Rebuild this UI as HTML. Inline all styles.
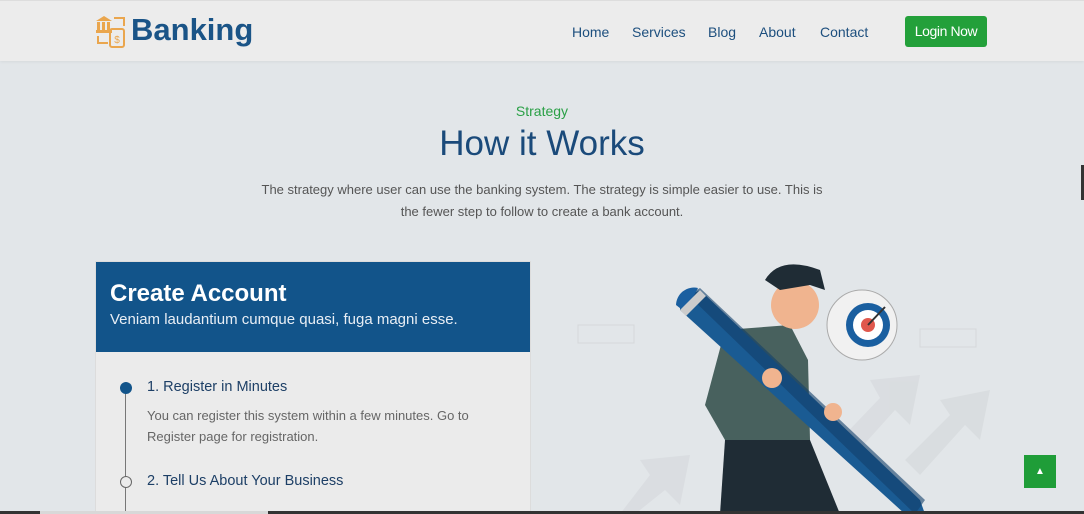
<!DOCTYPE html>
<html><head><meta charset="utf-8"><style>
*{margin:0;padding:0;box-sizing:border-box}
html,body{width:1084px;height:514px;overflow:hidden}
body{background:#e2e6e9;font-family:"Liberation Sans",sans-serif;position:relative}
.nav{position:absolute;left:0;top:0;width:1084px;height:61px;background:#ececec;border-top:1px solid #ddd;box-shadow:0 1px 3px rgba(0,0,0,.06)}
.logo{position:absolute;left:131px;top:11px;font-size:31px;color:#1a5487;font-weight:bold;letter-spacing:0px}
.links a{position:absolute;top:23px;font-size:14px;color:#1d4f7e;text-decoration:none}
.btn{position:absolute;left:905px;top:15px;width:82px;height:31px;background:#23a03a;border-radius:3px;color:#fff;font-size:14px;text-align:center;line-height:31px;letter-spacing:-0.4px}
.c{position:absolute;width:1084px;text-align:center}
.card{position:absolute;left:95px;top:261px;width:436px;height:260px;background:#ebebeb;border:1px solid #dcdcdc}
.head{height:90px;background:#12548a;padding:18px 14px;color:#fff}
</style></head><body>
<div class="nav">
<svg style="position:absolute;left:94px;top:13px" width="34" height="34" viewBox="0 0 34 34"><g fill="#eaa64e"><path d="M2 7 L10 2 L18 7 Z"/><rect x="3" y="8" width="3" height="8"/><rect x="8" y="8" width="3" height="8"/><rect x="13" y="8" width="3" height="8"/><rect x="2" y="16" width="16" height="3"/></g><g fill="none" stroke="#eaa64e" stroke-width="2"><rect x="16" y="15" width="14" height="18" rx="2"/><path d="M4 22v7h10M20 4h10v8"/></g><text x="23" y="29" font-size="10" fill="#eaa64e" text-anchor="middle" font-family="Liberation Sans">$</text></svg>
<div class="logo">Banking</div>
<div class="links"><a style="left:572px">Home</a><a style="left:632px">Services</a><a style="left:708px">Blog</a><a style="left:759px">About</a><a style="left:820px">Contact</a></div>
<div class="btn">Login Now</div>
</div>
<div class="c" style="top:103px;font-size:14px;color:#2aa046">Strategy</div>
<div class="c" style="top:124px;font-size:35px;color:#1a4a7a">How it Works</div>
<div class="c" style="top:179px;font-size:13px;color:#555;line-height:22px">The strategy where user can use the banking system. The strategy is simple easier to use. This is<br>the fewer step to follow to create a bank account.</div>
<div class="card"><div class="head"><div style="font-size:24px;font-weight:bold">Create Account</div><div style="font-size:15px;margin-top:3px;color:#e8eef5">Veniam laudantium cumque quasi, fuga magni esse.</div></div>
<div style="position:absolute;left:29px;top:126px;width:1px;height:140px;background:#777"></div>
<div style="position:absolute;left:24px;top:120px;width:12px;height:12px;border-radius:50%;background:#12548a"></div>
<div style="position:absolute;left:24px;top:214px;width:12px;height:12px;border-radius:50%;background:#ebebeb;border:1px solid #666"></div>
<div style="position:absolute;left:51px;top:117px;font-size:14.5px;color:#1d3f66">1. Register in Minutes</div>
<div style="position:absolute;left:51px;top:143px;font-size:13px;color:#666;line-height:21px">You can register this system within a few minutes. Go to<br>Register page for registration.</div>
<div style="position:absolute;left:51px;top:211px;font-size:14.5px;color:#1d3f66">2. Tell Us About Your Business</div>
</div>
<svg style="position:absolute;left:540px;top:250px" width="480" height="264" viewBox="0 0 480 264">
<g fill="#d8dbde" opacity=".8"><path d="M330 130 L380 125 L370 175 L355 160 L310 210 L295 195 L340 148Z"/><path d="M400 150 L450 140 L440 190 L425 175 L380 225 L365 210 L410 165Z"/><path d="M100 210 L150 205 L140 255 L125 240 L95 264 L80 264 L110 225Z"/></g>
<rect x="38" y="75" width="56" height="18" fill="none" stroke="#d5d8da"/><rect x="380" y="79" width="56" height="18" fill="none" stroke="#d5d8da"/>
<circle cx="322" cy="75" r="35" fill="#f1f1f1" stroke="#aaa"/><circle cx="328" cy="75" r="22" fill="#1a5fa0"/><circle cx="328" cy="75" r="15" fill="#fff"/><circle cx="328" cy="75" r="7" fill="#e0584d"/><path d="M328 75 L345 57" stroke="#333" stroke-width="2"/>
<path d="M185 80 L250 75 L268 110 L270 190 L185 190 L165 155 Z" fill="#48615e"/>
<path d="M185 190 L270 190 L300 264 L180 264Z" fill="#1f2c35"/>
<circle cx="255" cy="55" r="24" fill="#f0b48f"/><path d="M225 30 Q240 5 280 20 L285 40 L270 35 L240 40 Z" fill="#1f2c35"/>
<path d="M140 50 L160 40 L380 250 L385 264 L365 264 L140 60Z" fill="#1a5b93"/><path d="M148 45 L160 38 L385 250 L375 264Z" fill="#123f6a" opacity=".6"/>
<path d="M136 55 A18 18 0 0 1 158 38 L145 62Z" fill="#1a5fa0"/><path d="M140 60 L160 40 L166 46 L146 66Z" fill="#ccc"/>
<circle cx="232" cy="128" r="10" fill="#f0b48f"/><circle cx="293" cy="162" r="9" fill="#f0b48f"/>
</svg>
<div style="position:absolute;left:1024px;top:455px;width:32px;height:33px;background:#1f9d38;color:#fff;text-align:center;font-size:10px;line-height:33px">▲</div>
<div style="position:absolute;left:1081px;top:165px;width:3px;height:35px;background:#333"></div>
<div style="position:absolute;left:0;top:511px;width:1084px;height:3px;background:#333"></div>
<div style="position:absolute;left:40px;top:511px;width:228px;height:3px;background:#d8d8d8"></div>
</body></html>
